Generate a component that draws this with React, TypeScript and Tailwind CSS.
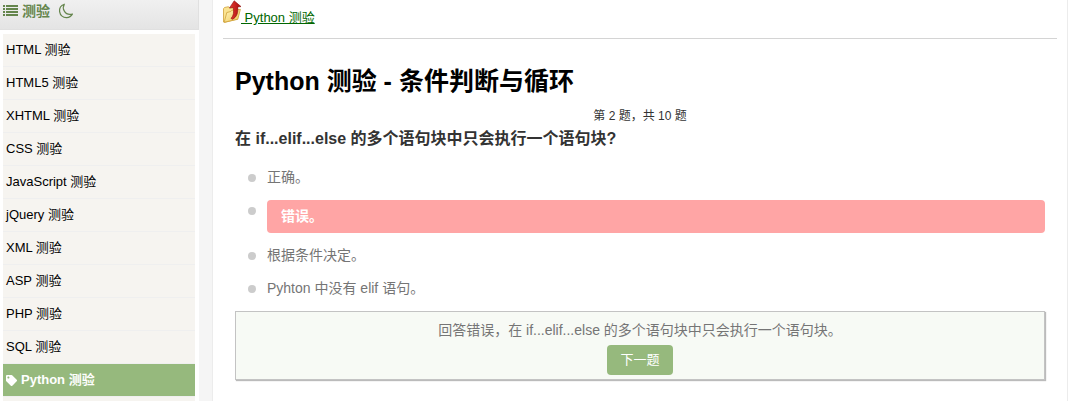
import { FaTag } from "react-icons/fa";
import clsx from "clsx";

const quizzes = [
  "HTML 测验",
  "HTML5 测验",
  "XHTML 测验",
  "CSS 测验",
  "JavaScript 测验",
  "jQuery 测验",
  "XML 测验",
  "ASP 测验",
  "PHP 测验",
  "SQL 测验",
  "Python 测验",
];

const options = ["正确。", "错误。", "根据条件决定。", "Pyhton 中没有 elif 语句。"];

const activeQuiz = "Python 测验";
const wrongAnswer = "错误。";

const ListIcon = () => (
  <svg viewBox="0 0 15 12" className="h-3 w-[15px]" fill="currentColor">
    <path d="M0 0h2v2H0zM3 0h12v2H3zM0 3h2v2H0zM3 3h12v2H3zM0 6h2v2H0zM3 6h12v2H3zM0 9h2v2H0zM3 9h12v2H3z" />
  </svg>
);

const MoonIcon = () => (
  <svg viewBox="0 0 16 16" className="size-4" fill="none" stroke="currentColor" strokeWidth="1.2" strokeLinejoin="round">
    <path d="M6.3 1.2C3.2 2.2 1.2 5 1.6 8.6c.5 3.8 3.6 6.2 7.1 6 2.500-.1 4.500-1.400 5.700-3.500-3.500.9-6.600-.4-8.200-3.200-1.300-2.300-1.100-4.700.1-6.700z" />
  </svg>
);

const FolderUpIcon = () => (
  <svg viewBox="0 0 18 23" className="h-[23px] w-[18px] shrink-0">
    <defs>
      <linearGradient id="folder" x1="0" y1="0" x2="1" y2="1">
        <stop offset="0" stopColor="#fff6c4" />
        <stop offset="1" stopColor="#f0c751" />
      </linearGradient>
      <linearGradient id="arrow" x1="0" y1="0" x2="1" y2="0">
        <stop offset="0" stopColor="#e63a30" />
        <stop offset="1" stopColor="#a80d10" />
      </linearGradient>
    </defs>
    <path d="M.5 22V8.700l1-1.200 4-.8 1 1.500 8-1.200v12L1.800 22.400z" fill="#fae391" stroke="#cfa23a" strokeWidth=".8" />
    <path d="M1.200 22.200l2.600-9.700 4-1 1-1.200 8.600-1-2.600 10z" fill="url(#folder)" stroke="#cfa23a" strokeWidth=".8" />
    <path d="M11.200.8L18 6.600l-3.300.3c.6 5.600-.6 9.900-5.200 12.400l-1.500-.9c2.600-2.600 3.100-6.200 2.200-10.900l-3.700.4z" fill="url(#arrow)" stroke="#8c0b0d" strokeWidth=".6" />
  </svg>
);

const Sidebar = () => {
  return (
    <aside className="w-[199px] shrink-0 flex flex-col bg-white">
      <div className="h-[30px] px-[3px] pb-2 flex items-center gap-1 bg-linear-to-b from-[#f0f0f0] to-[#e4e4e4] border-r border-b border-[#e0e0e0] text-[#64854c] text-sm font-bold">
        <ListIcon />
        <h2>测验</h2>
        <button type="button" aria-label="夜间模式" className="ml-1">
          <MoonIcon />
        </button>
      </div>
      <nav className="mt-1 ml-[3px] mr-1 flex-1 bg-[#f6f4f0]">
        {quizzes.map((quiz) => (
          <a
            key={quiz}
            href="#"
            className={clsx(
              "h-[33px] px-[3px] flex items-center gap-1 border-b border-[#efefef] text-[13px]",
              quiz === activeQuiz ? "bg-[#96b97d] text-white font-bold" : "text-black"
            )}
          >
            {quiz === activeQuiz && <FaTag className="size-[11px]" />}
            {quiz}
          </a>
        ))}
      </nav>
    </aside>
  );
};

const Options = () => {
  return (
    <ul className="mt-4 pl-[13px] flex flex-col gap-3 text-sm leading-[21px] text-[#757575]">
      {options.map((option) => (
        <li key={option} className="flex items-start gap-[11px]">
          <span className="mt-[7px] size-2 shrink-0 rounded-full bg-[#ccc]" />
          {option === wrongAnswer ? (
            <span className="flex-1 rounded bg-[#ffa5a5] px-[14px] py-[6px] font-bold text-white">{option}</span>
          ) : (
            <span>{option}</span>
          )}
        </li>
      ))}
    </ul>
  );
};

const Feedback = () => {
  return (
    <div className="mt-3 pt-2 pb-1 flex flex-col items-center gap-1 border border-[#c3c3c3] bg-[#f7faf5] shadow-[1px_1px_1px_#bbb]">
      <p className="text-sm leading-[21px] text-[#757575]">
        回答错误，在 if...elif...else 的多个语句块中只会执行一个语句块。
      </p>
      <button type="button" className="h-[30px] px-[13px] rounded bg-[#96b97d] text-[13px] text-white">
        下一题
      </button>
    </div>
  );
};

const App = () => {
  return (
    <div className="min-h-screen flex bg-[#f5f5f5] font-['Liberation_Sans','Noto_Sans_CJK_SC',sans-serif]">
      <Sidebar />
      <main className="ml-[13px] flex-1 min-w-0 px-[10px] border-x border-[#ececec] bg-white">
        <a href="#" className="h-[38px] flex items-start text-[13px] text-[#006600]">
          <FolderUpIcon />
          <span className="mt-2 underline whitespace-pre"> Python 测验</span>
        </a>
        <hr className="border-[#d4d4d4]" />
        <div className="px-3 pt-6">
          <h1 className="text-[25px] leading-9 font-bold text-black">Python 测验 - 条件判断与循环</h1>
          <p className="mt-2 text-center text-xs leading-[18px] text-[#333]">第 2 题，共 10 题</p>
          <h3 className="mt-[2px] text-base leading-6 font-bold text-[#333]">
            在 if...elif...else 的多个语句块中只会执行一个语句块?
          </h3>
          <Options />
          <Feedback />
        </div>
      </main>
    </div>
  );
};

export default App;
